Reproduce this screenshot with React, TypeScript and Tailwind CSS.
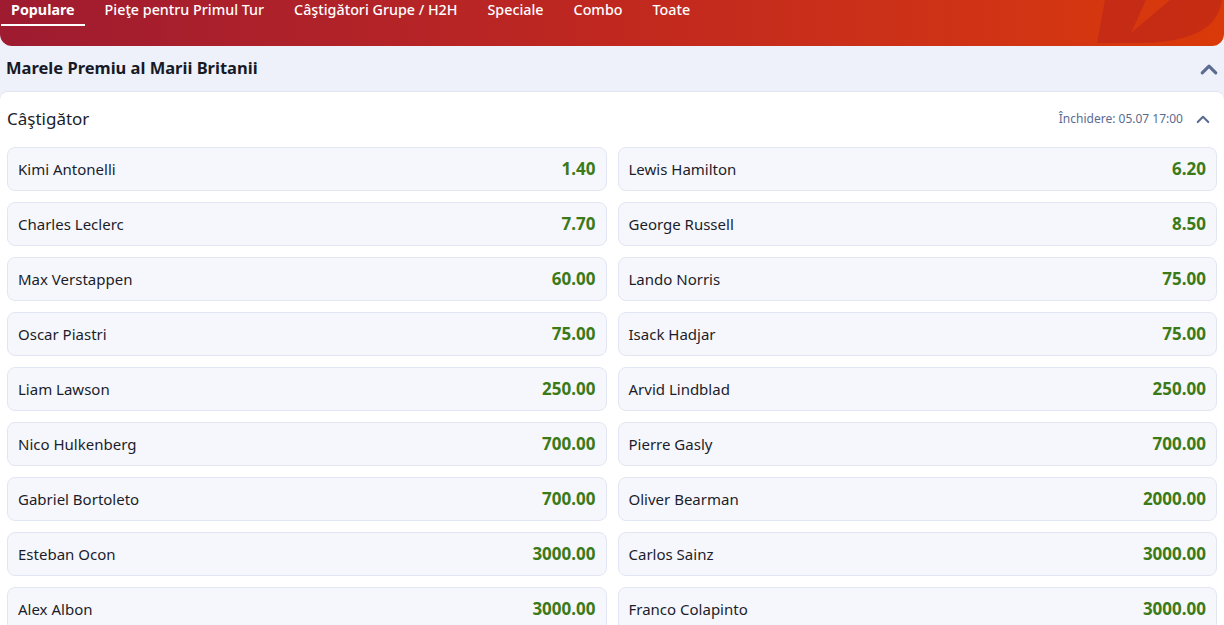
import React from 'react';

const tabs = ['Populare', 'Pieţe pentru Primul Tur', 'Câştigători Grupe / H2H', 'Speciale', 'Combo', 'Toate'];

const drivers: [string, string][] = [
  ['Kimi Antonelli', '1.40'],
  ['Lewis Hamilton', '6.20'],
  ['Charles Leclerc', '7.70'],
  ['George Russell', '8.50'],
  ['Max Verstappen', '60.00'],
  ['Lando Norris', '75.00'],
  ['Oscar Piastri', '75.00'],
  ['Isack Hadjar', '75.00'],
  ['Liam Lawson', '250.00'],
  ['Arvid Lindblad', '250.00'],
  ['Nico Hulkenberg', '700.00'],
  ['Pierre Gasly', '700.00'],
  ['Gabriel Bortoleto', '700.00'],
  ['Oliver Bearman', '2000.00'],
  ['Esteban Ocon', '3000.00'],
  ['Carlos Sainz', '3000.00'],
  ['Alex Albon', '3000.00'],
  ['Franco Colapinto', '3000.00'],
];

const ChevronUp = ({ size = 14, stroke = 2.6 }: { size?: number; stroke?: number }) => (
  <svg width={size} height={size} viewBox="0 0 16 16" fill="none">
    <path d="M2 11.5 8 5.5l6 6" stroke="#5b6b92" strokeWidth={stroke} strokeLinecap="round" strokeLinejoin="round" />
  </svg>
);

export default function App() {
  return (
    <div className="w-[1224px] h-[625px] overflow-hidden bg-white font-['Noto_Sans',sans-serif] text-[#1b1d2b]">
      {/* top tabs */}
      <div className="relative h-[46px] rounded-b-[12px] bg-gradient-to-r from-[#9e1b30] via-[#c0281f] to-[#da3a08] overflow-hidden">
        <svg className="absolute right-0 top-0" width="130" height="46" viewBox="0 0 130 46">
          <path d="M3 43 L11 0 L52 0 L37 33 L76 0 L128 0 C124 32 90 43 44 43 Z" fill="#b8231c" opacity="0.55" />
        </svg>
        <div className="relative flex items-start gap-[10px] px-[1px]">
          {tabs.map((t, i) => (
            <div key={t} className="flex flex-col items-center">
              <div className={`px-[10px] text-[14.3px] leading-[19px] text-white ${i === 0 ? 'font-bold' : 'font-medium'}`}>{t}</div>
              <div className={`mt-[5px] h-[2px] w-full ${i === 0 ? 'bg-white' : 'bg-transparent'}`} />
            </div>
          ))}
        </div>
      </div>

      {/* event header */}
      <div className="-mt-[12px] pt-[12px] bg-[#eef1f9]">
        <div className="flex h-[45px] items-center justify-between pl-[6px] pr-[6px]">
          <div className="text-[16.5px] font-bold text-[#171a26]">Marele Premiu al Marii Britanii</div>
          <ChevronUp size={18} stroke={2.8} />
        </div>

        {/* market panel */}
        <div className="rounded-t-[8px] border-t border-[#e1e6f1] bg-white px-[7px]">
          <div className="flex h-[55px] items-center justify-between pr-[7px]">
            <div className="-mt-[2px] text-[17px] text-[#1b1d2b]">Câştigător</div>
            <div className="-mt-[2px] flex items-center gap-[13px]">
              <span className="text-[12px] text-[#5b6b92]">Închidere: 05.07 17:00</span>
              <ChevronUp size={14} stroke={2.4} />
            </div>
          </div>
          <div className="grid grid-cols-2 gap-x-[11px] gap-y-[11px]">
            {drivers.map(([name, odd]) => (
              <div
                key={name}
                className="flex h-[44px] items-center justify-between rounded-[8px] border border-[#e1e6f2] bg-[#f6f7fc] pl-[10px] pr-[10px]"
              >
                <span className="text-[15px] text-[#1b1d2b]">{name}</span>
                <span className="text-[17px] font-bold text-[#3c7a18]">{odd}</span>
              </div>
            ))}
          </div>
        </div>
      </div>
    </div>
  );
}
